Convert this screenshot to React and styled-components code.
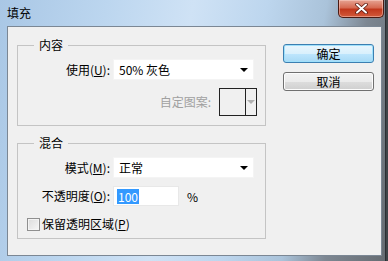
import React from "react";
import styled, { createGlobalStyle } from "styled-components";

const GlobalStyle = createGlobalStyle`
  html, body {
    margin: 0;
    padding: 0;
    background: #4a4f55;
  }
  body {
    font-family: "Noto Sans CJK SC", "Noto Sans", sans-serif;
    font-size: 12px;
  }
`;

const Desktop = styled.div`
  width: 388px;
  height: 261px;
  overflow: hidden;
  background: #3f4448;
`;

const Frame = styled.div`
  width: 385px;
  height: 261px;
  display: flex;
  flex-direction: column;
  background: linear-gradient(
    100deg,
    #a9c7e5 0%,
    #bcd6ef 25%,
    #cfe2f5 45%,
    #bdd6ee 62%,
    #aac3da 76%,
    #7d8792 86%,
    #666c72 100%
  );
  border-right: 1px solid #2b2f33;
`;

const TitleBar = styled.div`
  height: 26px;
  display: flex;
  align-items: flex-start;
  justify-content: space-between;
  padding-left: 7px;
`;

const Title = styled.span`
  margin-top: 5px;
  font-size: 12px;
  line-height: 16px;
  color: #000;
`;

const CloseButton = styled.div`
  width: 44px;
  height: 17px;
  margin-right: 1px;
  border: 1px solid #4a1a12;
  border-top: none;
  border-radius: 0 0 5px 5px;
  background: linear-gradient(180deg, #e6a393 0%, #d66a52 45%, #c1371c 55%, #d25a3a 100%);
  display: flex;
  align-items: center;
  justify-content: center;
  box-shadow: inset 0 0 0 1px rgba(255, 220, 210, 0.45);
`;

const Client = styled.div`
  flex: 1;
  margin: 0 3px 5px 7px;
  border: 1px solid #7b8794;
  background: #f0f0f0;
  display: flex;
  gap: 17px;
  padding: 10px 0 0 9px;
`;

const LeftColumn = styled.div`
  display: flex;
  flex-direction: column;
  gap: 9px;
`;

const Group = styled.fieldset`
  margin: 0;
  width: 247px;
  box-sizing: border-box;
  border: 1px solid #c4c4c4;
  padding: 0 8px ${(p) => p.$bottom}px 0;
  display: flex;
  flex-direction: column;
  gap: 8px;
`;

const Legend = styled.legend`
  margin-left: 16px;
  padding: 0 5px;
  font-size: 12px;
  line-height: 16px;
  color: #000;
`;

const FieldRow = styled.div`
  display: grid;
  grid-template-columns: 92px ${(p) => p.$width}px auto;
  column-gap: 3px;
  align-items: center;
  &:first-of-type {
    margin-top: 6px;
  }
`;

const Label = styled.span`
  text-align: right;
  white-space: nowrap;
  font-size: 12px;
  line-height: 16px;
  color: ${(p) => (p.$disabled ? "#a0a0a0" : "#000")};
`;

const Key = styled.span`
  text-decoration: underline;
`;

const Select = styled.div`
  height: 21px;
  box-sizing: border-box;
  background: #fff;
  border: 1px solid #f4f4f4;
  display: flex;
  align-items: center;
  justify-content: space-between;
  padding: 0 5px 0 5px;
  font-size: 12px;
  color: #000;
`;

const Arrow = styled.span`
  width: 0;
  height: 0;
  border-left: 4px solid transparent;
  border-right: 4px solid transparent;
  border-top: 4px solid ${(p) => p.$color || "#000"};
`;

const PatternRow = styled.div`
  display: flex;
  justify-content: flex-end;
  align-items: center;
  gap: 8px;
`;

const PatternBox = styled.div`
  width: 38px;
  height: 28px;
  box-sizing: border-box;
  border: 1px solid #222;
  display: flex;
`;

const PatternSwatch = styled.div`
  flex: 1;
  background: #f0f0f0;
`;

const PatternArrow = styled.div`
  width: 10px;
  border-left: 1px solid #222;
  display: flex;
  align-items: center;
  justify-content: center;
`;

const TextInput = styled.div`
  height: 20px;
  box-sizing: border-box;
  background: #fff;
  border: 1px solid #e8e8e8;
  display: flex;
  align-items: center;
  padding-left: 3px;
`;

const Selected = styled.span`
  background: #3399ff;
  color: #fff;
  font-size: 12px;
  line-height: 15px;
  padding: 0 1px;
`;

const Unit = styled.span`
  margin-left: 5px;
  font-size: 12px;
  color: #000;
`;

const CheckRow = styled.label`
  display: flex;
  align-items: center;
  gap: 2px;
  margin-left: 9px;
  margin-top: 2px;
  font-size: 12px;
  line-height: 16px;
  color: #000;
`;

const CheckBox = styled.span`
  width: 13px;
  height: 13px;
  box-sizing: border-box;
  border: 1px solid #8f8f8f;
  background: linear-gradient(135deg, #dcdcdc 0%, #f6f6f6 100%);
  box-shadow: inset 0 0 0 1px #f4f4f4;
`;

const RightColumn = styled.div`
  display: flex;
  flex-direction: column;
  gap: 9px;
  padding-top: 7px;
`;

const Button = styled.div`
  width: 91px;
  height: 19px;
  box-sizing: border-box;
  border-radius: 3px;
  border: 1px solid ${(p) => (p.$primary ? "#3c7fb1" : "#707070")};
  background: ${(p) =>
    p.$primary
      ? "linear-gradient(180deg, #eaf6fd 0%, #d9f0fc 50%, #bee6fd 51%, #a7d9f5 100%)"
      : "linear-gradient(180deg, #f2f2f2 0%, #ebebeb 50%, #dddddd 51%, #cfcfcf 100%)"};
  box-shadow: ${(p) =>
    p.$primary ? "inset 0 0 0 1px #9fe0fb" : "inset 0 0 0 1px #fcfcfc"};
  display: flex;
  align-items: center;
  justify-content: center;
  font-size: 12px;
  line-height: 16px;
  color: #000;
`;

const App = () => {
  return (
    <>
      <GlobalStyle />
      <Desktop>
        <Frame>
          <TitleBar>
            <Title>填充</Title>
            <CloseButton>
              <svg width="13" height="11" viewBox="0 0 13 11">
                <path
                  d="M2 1.5 L11 9.5 M11 1.5 L2 9.5"
                  stroke="#5a1a10"
                  strokeWidth="3.6"
                  strokeLinecap="round"
                />
                <path
                  d="M2 1.5 L11 9.5 M11 1.5 L2 9.5"
                  stroke="#fff"
                  strokeWidth="2"
                  strokeLinecap="round"
                />
              </svg>
            </CloseButton>
          </TitleBar>
          <Client>
            <LeftColumn>
              <Group $bottom={9}>
                <Legend>内容</Legend>
                <FieldRow $width={141}>
                  <Label>
                    使用(<Key>U</Key>):
                  </Label>
                  <Select>
                    <span>50% 灰色</span>
                    <Arrow />
                  </Select>
                </FieldRow>
                <PatternRow>
                  <Label $disabled>自定图案:</Label>
                  <PatternBox>
                    <PatternSwatch />
                    <PatternArrow>
                      <Arrow $color="#b0b0b0" />
                    </PatternArrow>
                  </PatternBox>
                </PatternRow>
              </Group>
              <Group $bottom={6}>
                <Legend>混合</Legend>
                <FieldRow $width={141}>
                  <Label>
                    模式(<Key>M</Key>):
                  </Label>
                  <Select>
                    <span>正常</span>
                    <Arrow />
                  </Select>
                </FieldRow>
                <FieldRow $width={66}>
                  <Label>
                    不透明度(<Key>O</Key>):
                  </Label>
                  <TextInput>
                    <Selected>100</Selected>
                  </TextInput>
                  <Unit>%</Unit>
                </FieldRow>
                <CheckRow>
                  <CheckBox />
                  <span>
                    保留透明区域(<Key>P</Key>)
                  </span>
                </CheckRow>
              </Group>
            </LeftColumn>
            <RightColumn>
              <Button $primary>确定</Button>
              <Button>取消</Button>
            </RightColumn>
          </Client>
        </Frame>
      </Desktop>
    </>
  );
};

export default App;
